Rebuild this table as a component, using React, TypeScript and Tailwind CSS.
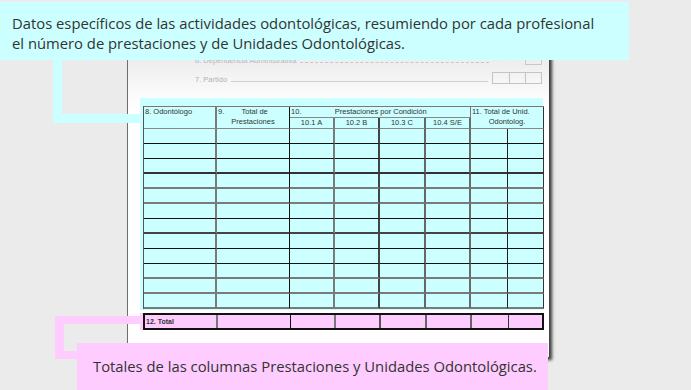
import React from "react";

const colW = "grid-cols-[73px_73px_45px_45px_46px_45px_37px_36px]";

// right-border styles per column (written out in full)
const colBorders = [
  "border-r-2 border-r-[#7a7a7a]",
  "border-r border-r-[#111]",
  "border-r-2 border-r-[#7a7a7a]",
  "border-r-2 border-r-[#444]",
  "border-r-2 border-r-[#666]",
  "border-r-2 border-r-[#6a6a6a]",
  "border-r border-r-[#222]",
  "border-r border-r-[#333]",
];

// bottom-border styles per body row
const rowBorders = [
  "border-b border-b-[#111]",
  "border-b border-b-[#111]",
  "border-b-2 border-b-[#333]",
  "border-b-2 border-b-[#7a7a7a]",
  "border-b-2 border-b-[#7a7a7a]",
  "border-b border-b-[#111]",
  "border-b-2 border-b-[#444]",
  "border-b border-b-[#111]",
  "border-b border-b-[#111]",
  "border-b-2 border-b-[#7a7a7a]",
  "border-b-2 border-b-[#7a7a7a]",
  "border-b-2 border-b-[#7a7a7a]",
];

const hdr = "text-[7.5px] leading-[10px] text-[#333] whitespace-nowrap";

export default function App() {
  return (
    <div
      className="relative w-[691px] h-[390px] overflow-hidden bg-[#ebebeb]"
      style={{ fontFamily: '"Liberation Sans", Arial, sans-serif' }}
    >
      {/* Paper */}
      <div className="ml-[127px] mt-[30px] w-[422px] h-[327px] border-l border-l-[#6f6f6f] shadow-[3px_3px_3px_rgba(0,0,0,0.75)] bg-[linear-gradient(to_bottom,#e6e6e6_0px,#efefef_35px,#fbfbfb_65px,#ffffff_80px)]">
        <div className="pt-[23px] pl-[67px] pr-[7px]">
          {/* row 6 */}
          <div className="flex items-end h-[12px]">
            <span className="text-[7.5px] leading-[9px] text-[#b8b8b8] whitespace-nowrap">
              6. Dependencia Administrativa
            </span>
            <div className="flex-1 ml-[4px] mr-[36px] mb-[2px] border-b border-dashed border-b-[#c8c8c8]" />
            <div className="w-[17px] h-[12px] border border-[#c8c8c8]" />
          </div>
          {/* row 7 */}
          <div className="flex items-end h-[12px] mt-[7px]">
            <span className="text-[7.5px] leading-[9px] text-[#b3b3b3] whitespace-nowrap">
              7. Partido
            </span>
            <div className="flex-1 ml-[4px] mr-[4px] mb-[2px] border-b border-b-[#cfcfcf]" />
            <div className="flex h-[12px] border border-[#c4c4c4]">
              <div className="w-[17px] border-r border-r-[#c4c4c4]" />
              <div className="w-[16px] border-r border-r-[#c4c4c4]" />
              <div className="w-[15px]" />
            </div>
          </div>
        </div>

        {/* Cyan highlighted table */}
        <div className="ml-[12px] mt-[14px] w-[403px] bg-[#ccffff] pl-[3px] pt-[8px] pb-[1px]">
          <div className={`grid ${colW} w-[401px] border-l border-t border-l-[#555] border-t-[#777]`}>
            {/* header */}
            <div className={`row-span-2 h-[22px] pl-[1px] border-b border-b-[#888] ${colBorders[0]} ${hdr}`}>
              8. Odontólogo
            </div>
            <div className={`row-span-2 h-[22px] border-b border-b-[#888] ${colBorders[1]} ${hdr} flex flex-col`}>
              <div className="flex">
                <span className="pl-[1px]">9.</span>
                <span className="flex-1 text-center pr-[4px]">Total de</span>
              </div>
              <div className="text-center">Prestaciones</div>
            </div>
            <div className={`col-span-4 h-[11px] border-b border-b-[#888] border-r border-r-[#777] ${hdr} flex`}>
              <span className="pl-[1px]">10.</span>
              <span className="flex-1 text-center pr-[10px]">Prestaciones por Condición</span>
            </div>
            <div className={`col-span-2 row-span-2 h-[22px] border-b border-b-[#888] border-r border-r-[#333] ${hdr} flex flex-col`}>
              <div className="pl-[1px]">11. Total de Unid.</div>
              <div className="text-center">Odontolog.</div>
            </div>
            <div className={`h-[11px] border-b border-b-[#888] ${colBorders[2]} ${hdr} text-center`}>10.1 A</div>
            <div className={`h-[11px] border-b border-b-[#888] ${colBorders[3]} ${hdr} text-center`}>10.2 B</div>
            <div className={`h-[11px] border-b border-b-[#888] ${colBorders[4]} ${hdr} text-center`}>10.3 C</div>
            <div className={`h-[11px] border-b border-b-[#888] ${colBorders[5]} ${hdr} text-center`}>10.4 S/E</div>

            {/* body */}
            {rowBorders.map((rb, r) =>
              colBorders.map((cb, c) => (
                <div key={`${r}-${c}`} className={`h-[15px] ${rb} ${cb}`} />
              ))
            )}
          </div>
        </div>

        {/* Pink highlighted total row */}
        <div className="ml-[12px] mt-[3px] w-[403px] bg-[#ffccff] pl-[3px]">
          <div className={`grid ${colW} h-[17px] border-2 border-[#111] w-[401px]`}>
            <div className="border-r-2 border-r-[#777] text-[7px] leading-[13px] pl-[1px] text-[#333] font-bold whitespace-nowrap">
              12. Total
            </div>
            <div className="border-r border-r-[#111]" />
            <div className="border-r-2 border-r-[#777]" />
            <div className="border-r-2 border-r-[#555]" />
            <div className="border-r-2 border-r-[#666]" />
            <div className="border-r-2 border-r-[#666]" />
            <div className="border-r border-r-[#333]" />
            <div />
          </div>
        </div>
      </div>

      {/* Top callout */}
      <div className="absolute left-0 top-[2px] w-[629px] h-[58px] bg-[#ccffff] pl-[12px] pt-[11px]">
        <p
          className="text-[14.8px] leading-[20px] text-[#333] whitespace-nowrap"
          style={{ fontFamily: '"Open Sans", "Noto Sans", sans-serif' }}
        >
          Datos específicos de las actividades odontológicas, resumiendo por cada profesional
          <br />
          el número de prestaciones y de Unidades Odontológicas.
        </p>
      </div>
      {/* Top connector */}
      <div className="absolute left-[53px] top-[60px] w-[9px] h-[63px] bg-[#ccffff]" />
      <div className="absolute left-[53px] top-[114px] w-[88px] h-[9px] bg-[#ccffff]" />

      {/* Bottom connector */}
      <div className="absolute left-[55px] top-[316px] w-[86px] h-[8px] bg-[#ffccff]" />
      <div className="absolute left-[55px] top-[316px] w-[9px] h-[43px] bg-[#ffccff]" />
      <div className="absolute left-[55px] top-[351px] w-[23px] h-[8px] bg-[#ffccff]" />

      {/* Bottom callout */}
      <div className="absolute left-[77px] top-[343px] w-[471px] h-[47px] bg-[#ffccff] pl-[16px] pt-[13px]">
        <p
          className="text-[14.8px] leading-[20px] text-[#333] whitespace-nowrap"
          style={{ fontFamily: '"Open Sans", "Noto Sans", sans-serif' }}
        >
          Totales de las columnas Prestaciones y Unidades Odontológicas.
        </p>
      </div>
    </div>
  );
}
